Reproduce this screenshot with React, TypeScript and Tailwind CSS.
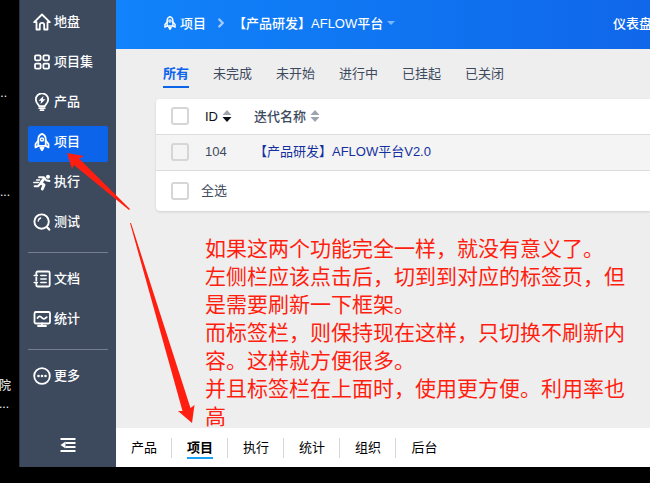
import React from 'react';
import { ChevronRight } from 'lucide-react';

interface NavItem {
  label: string;
  icon: React.FC<{ className?: string }>;
}

interface IconProps {
  className?: string;
  children?: React.ReactNode;
}

const Icon: React.FC<IconProps> = ({ className = 'size-[18px]', children }) => (
  <svg
    viewBox="0 0 18 18"
    fill="none"
    stroke="currentColor"
    strokeWidth="1.8"
    strokeLinecap="round"
    strokeLinejoin="round"
    className={`shrink-0 ${className}`}
    aria-hidden="true"
  >
    {children}
  </svg>
);

const HomeIcon: React.FC<IconProps> = ({ className }) => (
  <Icon className={className}>
    <path d="M1.200 9.200 9 1.500l7.800 7.700h-2.300v7.300H11.200v-4.400a2.200 2.200 0 0 0-4.400 0v4.400H3.500V9.200z" />
  </Icon>
);

const GridIcon: React.FC<IconProps> = ({ className }) => (
  <Icon className={className}>
    <rect x="2" y="2.300" width="5.600" height="5" rx="1.200" />
    <rect x="10.400" y="2.300" width="5.600" height="5" rx="1.200" />
    <rect x="2" y="10.600" width="5.600" height="5" rx="1.200" />
    <rect x="10.400" y="10.600" width="5.600" height="5" rx="1.200" />
  </Icon>
);

const BulbIcon: React.FC<IconProps> = ({ className }) => (
  <Icon className={className}>
    <path d="M6.200 13.200C5.800 11.500 2.800 10.300 2.800 6.600a6.200 6.200 0 0 1 12.400 0c0 3.700-3 4.900-3.400 6.600z" />
    <path d="M6.300 15.200h5.400M7.500 17.200h3" />
    <path d="M10.500 3 5.500 7.800h2.600L7.500 11l5-4.700H9.900z" fill="currentColor" stroke="none" />
  </Icon>
);

const RocketIcon: React.FC<IconProps> = ({ className }) => (
  <Icon className={className}>
    <path d="M5.300 12.800V6C5.300 3.500 7.500 1.500 9 .9c1.500.6 3.700 2.600 3.700 5.100v6.800z" />
    <path d="M5.300 7.500 2.500 11v3.400l3-1.600M12.700 7.500l2.800 3.500v3.400l-3-1.600" />
    <circle cx="9" cy="6.500" r="1.500" strokeWidth="1.400" />
    <path d="M7.500 14.700h3L9 17.200z" fill="currentColor" />
  </Icon>
);

const RunIcon: React.FC<IconProps> = ({ className }) => (
  <Icon className={className}>
    <circle cx="15" cy="3.700" r="2" fill="currentColor" stroke="none" />
    <path d="M6 4.200h4.700l2.300 3 3.500.8" strokeWidth="1.900" />
    <path d="m11.300 5.400-3.500 4.400 3.200 2.200-1.700 4" strokeWidth="2.900" />
    <path d="M7.400 10.800 5 13.300H1.700" strokeWidth="2.100" />
    <path d="M3.600 7h3M.8 9.500h4.500" strokeWidth="1.500" />
  </Icon>
);

const SearchIcon: React.FC<IconProps> = ({ className }) => (
  <Icon className={className}>
    <circle cx="8.600" cy="8.600" r="7.200" strokeWidth="1.900" />
    <path d="m13.800 14 2.400 2.600" strokeWidth="2.200" />
    <path d="M5.200 8a3.600 3.600 0 0 1 2.500-3" strokeWidth="1.400" />
  </Icon>
);

const DocIcon: React.FC<IconProps> = ({ className }) => (
  <Icon className={className}>
    <path d="M3.300 4.800V3c0-.9.600-1.500 1.500-1.500h10.400c.9 0 1.500.6 1.500 1.500v12c0 .9-.6 1.500-1.500 1.500H4.800c-.9 0-1.500-.6-1.500-1.500v-1.800M3.300 7.500v3" />
    <path d="M1.200 5.500h3.200M1.200 12.500h3.200M7.800 5.500h5.400M7.800 9h5.400M7.800 12.500h5.400" strokeWidth="1.500" />
  </Icon>
);

const MonitorIcon: React.FC<IconProps> = ({ className }) => (
  <Icon className={className}>
    <rect x="1.500" y="2" width="15.500" height="11.500" rx="1.500" />
    <path d="M4.500 8c1.500-2 2.800-2 4.300-.3s3 1.500 4.900-.5M5 16h8M9 13.500V16" />
  </Icon>
);

const MoreIcon: React.FC<IconProps> = ({ className }) => (
  <Icon className={className}>
    <circle cx="9" cy="9" r="7.800" />
    <circle cx="5.500" cy="9" r="1.300" fill="currentColor" stroke="none" />
    <circle cx="9" cy="9" r="1.300" fill="currentColor" stroke="none" />
    <circle cx="12.500" cy="9" r="1.300" fill="currentColor" stroke="none" />
  </Icon>
);

const NAV_GROUPS: NavItem[][] = [
  [
    { label: '地盘', icon: HomeIcon },
    { label: '项目集', icon: GridIcon },
    { label: '产品', icon: BulbIcon },
    { label: '项目', icon: RocketIcon },
    { label: '执行', icon: RunIcon },
    { label: '测试', icon: SearchIcon },
  ],
  [
    { label: '文档', icon: DocIcon },
    { label: '统计', icon: MonitorIcon },
  ],
  [{ label: '更多', icon: MoreIcon }],
];

const FILTERS = ['所有', '未完成', '未开始', '进行中', '已挂起', '已关闭'];
const APP_TABS = ['产品', '项目', '执行', '统计', '组织', '后台'];

const NOTES = [
  '如果这两个功能完全一样，就没有意义了。',
  '左侧栏应该点击后，切到到对应的标签页，但是需要刷新一下框架。',
  '而标签栏，则保持现在这样，只切换不刷新内容。这样就方便很多。',
  '并且标签栏在上面时，使用更方便。利用率也高',
];

const SortMark: React.FC<{ active?: boolean }> = ({ active }) => (
  <svg viewBox="0 0 10 14" className="w-[10px] h-[14px]" aria-hidden="true">
    <path d="M5 1 9.500 6h-9z" fill="#9ea3b0" />
    <path d="M5 13 .5 8h9z" fill={active ? '#0b0f18' : '#9ea3b0'} />
  </svg>
);

const Checkbox: React.FC<{ id?: string; label?: string }> = ({ id, label }) => (
  <input
    id={id}
    type="checkbox"
    aria-label={label}
    className="block size-[18px] shrink-0 appearance-none rounded-[3px] border-2 border-[#d6d6d6] checked:bg-[#0c64eb]"
  />
);

const Desktop = () => (
  <div className="relative w-[19px] shrink-0 overflow-hidden text-xs leading-4 text-white">
    <span className="absolute -left-[3px] top-[85px]">...</span>
    <span className="absolute left-0 top-[184px]">...</span>
    <span className="absolute -left-px top-[378px]">院</span>
    <span className="absolute -left-px top-[396px]">...</span>
  </div>
);

const Sidebar = () => (
  <aside className="flex w-[97px] shrink-0 flex-col border-l border-[#2c3340] bg-[#3d4a5e] px-2 pt-1.5 pb-3 text-white">
    <nav>
      {NAV_GROUPS.map((group, i) => (
        <ul
          key={i}
          className={`flex flex-col gap-1 ${i > 0 ? 'mt-2.5 border-t border-[#737d8c] pt-2.5' : ''}`}
        >
          {group.map(({ label, icon: ItemIcon }) => (
            <li key={label}>
              <a
                href="#"
                className={`flex h-9 items-center gap-[3px] rounded-xs pl-[5px] pb-[5px] font-medium ${
                  label === '项目' ? 'bg-[#0c64eb]' : ''
                }`}
              >
                <ItemIcon />
                <span>{label}</span>
              </a>
            </li>
          ))}
        </ul>
      ))}
    </nav>
    <button type="button" aria-label="收起" className="mt-auto flex h-5 items-center justify-center">
      <svg viewBox="0 0 16 16" className="size-4" fill="none" stroke="currentColor" strokeWidth="2" aria-hidden="true">
        <path d="M.5 2h15M5.500 6h10M5.500 10h10M.5 14h15" />
        <path d="M5.500 4.500v7L.5 8z" fill="currentColor" stroke="none" />
      </svg>
    </button>
  </aside>
);

const Header = () => (
  <header className="flex h-[49px] shrink-0 items-center bg-gradient-to-r from-[#1183fb] to-[#1067e9] pb-[3px] pl-[47px] text-white">
    <a href="#" className="flex items-center gap-[3px] font-medium">
      <RocketIcon className="size-[14px]" />
      项目
    </a>
    <ChevronRight className="mx-2 size-[14px] text-[#a5ccfb]" strokeWidth={4} />
    <button type="button" className="-ml-1 flex items-center gap-1 whitespace-nowrap pl-px font-medium">
      【产品研发】AFLOW平台
      <svg viewBox="0 0 8 4" className="h-1 w-2" aria-hidden="true">
        <path d="M0 0h8L4 4z" fill="#7db6fb" />
      </svg>
    </button>
    <nav className="ml-auto w-[37px] overflow-hidden whitespace-nowrap">
      <a href="#" className="font-medium">仪表盘</a>
    </nav>
  </header>
);

const IterationTable = () => (
  <section className="ml-10 rounded-l-sm bg-white text-[#3d4a5e] shadow-sm">
    <table className="w-full table-fixed border-collapse text-left">
      <thead>
        <tr className="h-[35px] border-b border-[#dcdcdc]">
          <th className="w-[49px] pl-[15px]">
            <Checkbox label="全选" />
          </th>
          <th className="w-[49px] font-medium text-[#0b0f18]">
            <button type="button" className="flex items-center gap-1">
              ID <SortMark active />
            </button>
          </th>
          <th className="font-medium">
            <button type="button" className="flex items-center gap-1">
              迭代名称 <SortMark />
            </button>
          </th>
        </tr>
      </thead>
      <tbody>
        <tr className="h-9 border-b border-[#dcdcdc] bg-[#f4f4f4]">
          <td className="pl-[15px]">
            <Checkbox label="选择 104" />
          </td>
          <td className="pb-0.5">104</td>
          <td className="pb-0.5">
            <a href="#" className="text-[#14309f]">【产品研发】AFLOW平台V2.0</a>
          </td>
        </tr>
      </tbody>
    </table>
    <div className="flex h-10 items-center gap-3 pl-[15px]">
      <Checkbox id="check-all" />
      <label htmlFor="check-all">全选</label>
    </div>
  </section>
);

const AppTabs = () => (
  <nav className="flex h-[39px] shrink-0 items-center bg-white text-black">
    {APP_TABS.map((tab) => (
      <button
        key={tab}
        type="button"
        className="flex h-5 w-14 justify-center border-r border-[#d8d8d8] pl-px last:border-r-0"
      >
        <span className={`h-[21px] ${tab === '项目' ? 'border-b-2 border-[#1aa0f5] font-bold' : ''}`}>{tab}</span>
      </button>
    ))}
  </nav>
);

// hand-drawn remarks that sit on top of the window
const Remarks = () => (
  <div className="pointer-events-none absolute inset-0 text-[#ff1e10]">
    <svg className="absolute left-0 top-0 h-[440px] w-[220px]" viewBox="0 0 220 440" fill="currentColor" aria-hidden="true">
      <path d="M67 153 84 156 79 158.500 130 209 129 210 74 165 72 169z" />
      <path d="M130 223 131 223 190.500 408 194.500 405 192 423 178 411 182.500 411z" />
    </svg>
    <div className="absolute left-[205px] top-[235px] w-[425px] text-[21px] leading-7">
      {NOTES.map((note) => (
        <p key={note}>{note}</p>
      ))}
    </div>
  </div>
);

const App: React.FC = () => {
  return (
    <div className="relative flex h-screen overflow-hidden bg-black pb-4 font-['Liberation_Sans','Noto_Sans_CJK_SC',sans-serif] text-[13px] leading-[19px]">
      <Desktop />
      <Sidebar />
      <div className="flex min-w-0 flex-1 flex-col">
        <Header />
        <main className="min-h-0 flex-1 bg-[#eeeeee]">
          <nav className="flex gap-6 pl-[47px] pt-[15px] pb-[11px] text-[#3d4a5e]">
            {FILTERS.map((filter) => (
              <a
                key={filter}
                href="#"
                className={`h-6 whitespace-nowrap ${
                  filter === '所有' ? 'border-b-2 border-[#0c64eb] font-bold text-[#0c64eb]' : ''
                }`}
              >
                {filter}
              </a>
            ))}
          </nav>
          <IterationTable />
        </main>
        <AppTabs />
      </div>
      <Remarks />
    </div>
  );
};

export default App;
